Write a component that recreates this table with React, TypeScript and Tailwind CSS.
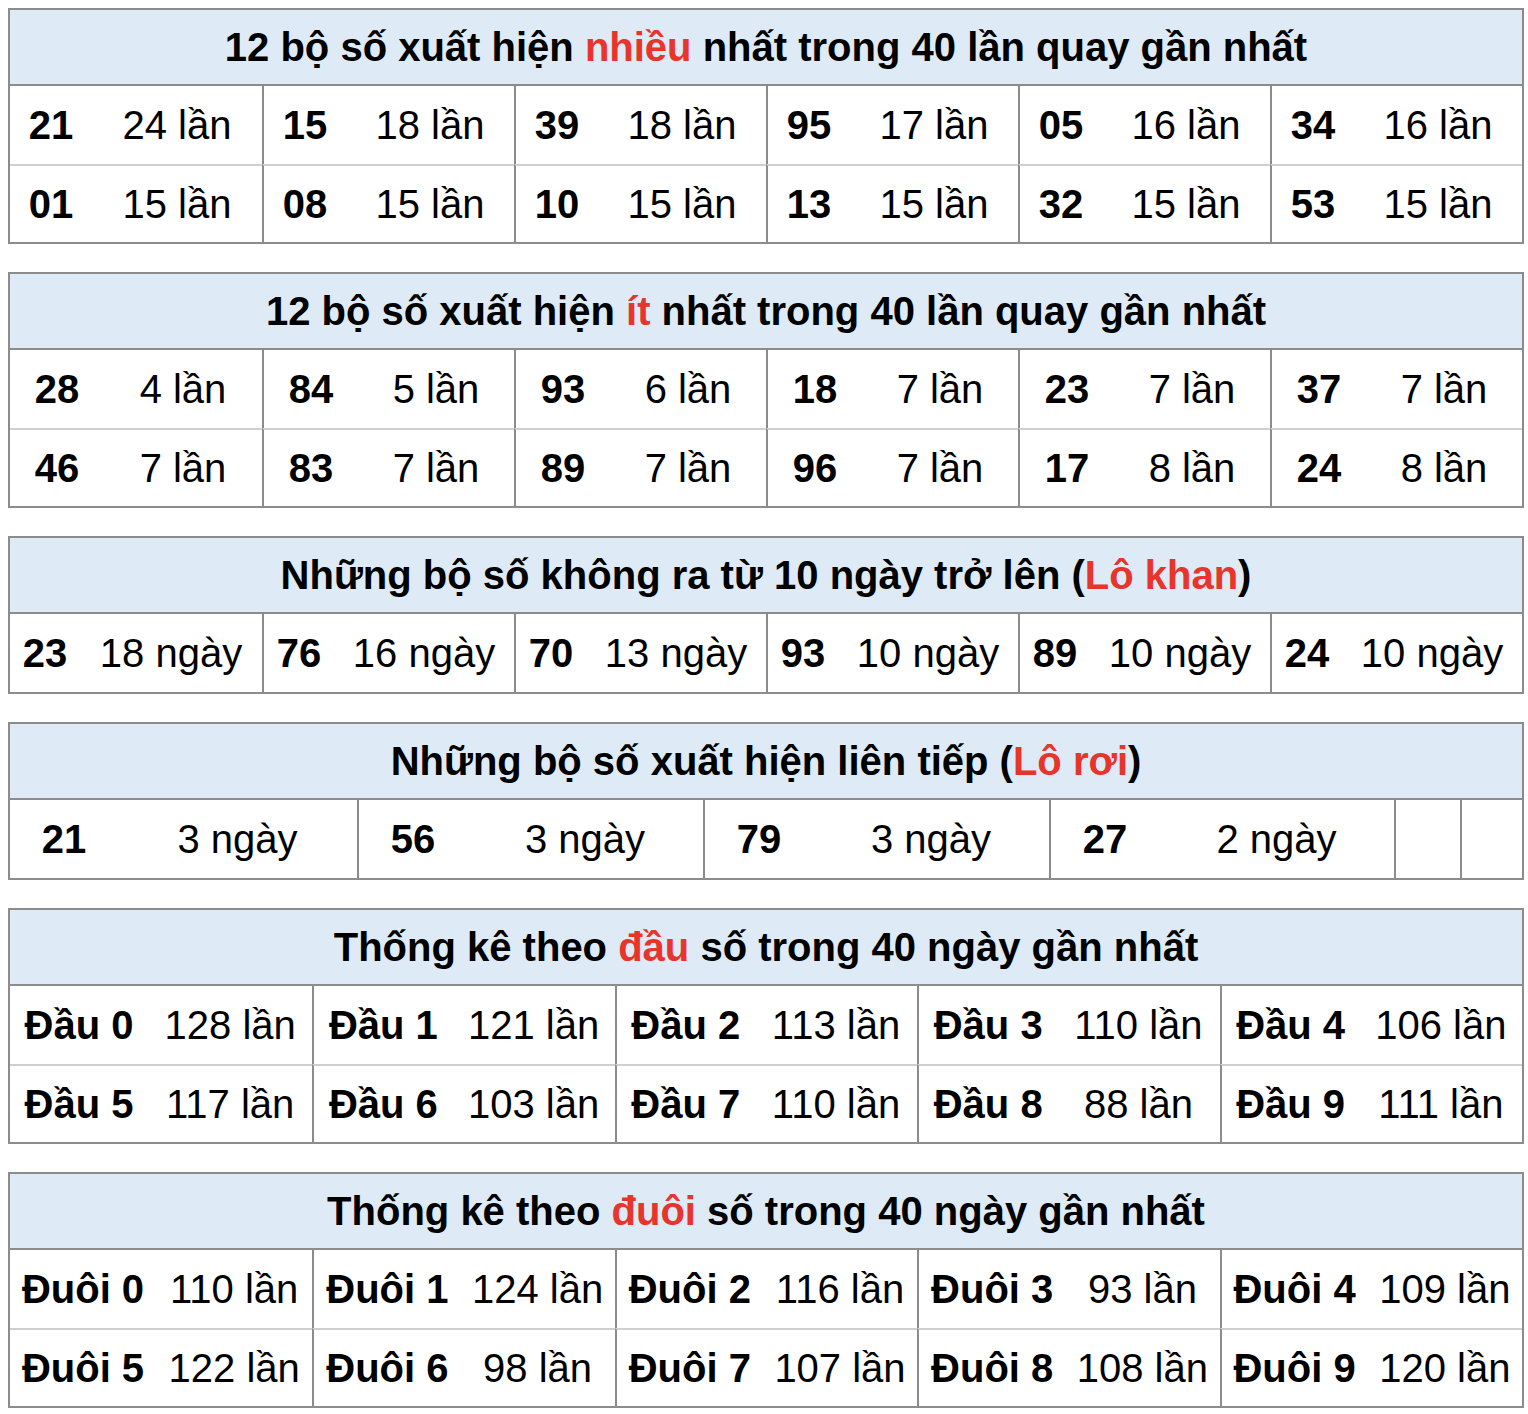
const nhieu = [
  ["21", "24 lần"], ["15", "18 lần"], ["39", "18 lần"], ["95", "17 lần"], ["05", "16 lần"], ["34", "16 lần"],
  ["01", "15 lần"], ["08", "15 lần"], ["10", "15 lần"], ["13", "15 lần"], ["32", "15 lần"], ["53", "15 lần"],
];

const it = [
  ["28", "4 lần"], ["84", "5 lần"], ["93", "6 lần"], ["18", "7 lần"], ["23", "7 lần"], ["37", "7 lần"],
  ["46", "7 lần"], ["83", "7 lần"], ["89", "7 lần"], ["96", "7 lần"], ["17", "8 lần"], ["24", "8 lần"],
];

const khan = [
  ["23", "18 ngày"], ["76", "16 ngày"], ["70", "13 ngày"], ["93", "10 ngày"], ["89", "10 ngày"], ["24", "10 ngày"],
];

const roi = [
  ["21", "3 ngày"], ["56", "3 ngày"], ["79", "3 ngày"], ["27", "2 ngày"], ["", ""], ["", ""],
];

const dau = [
  ["Đầu 0", "128 lần"], ["Đầu 1", "121 lần"], ["Đầu 2", "113 lần"], ["Đầu 3", "110 lần"], ["Đầu 4", "106 lần"],
  ["Đầu 5", "117 lần"], ["Đầu 6", "103 lần"], ["Đầu 7", "110 lần"], ["Đầu 8", "88 lần"], ["Đầu 9", "111 lần"],
];

const duoi = [
  ["Đuôi 0", "110 lần"], ["Đuôi 1", "124 lần"], ["Đuôi 2", "116 lần"], ["Đuôi 3", "93 lần"], ["Đuôi 4", "109 lần"],
  ["Đuôi 5", "122 lần"], ["Đuôi 6", "98 lần"], ["Đuôi 7", "107 lần"], ["Đuôi 8", "108 lần"], ["Đuôi 9", "120 lần"],
];

function Header({ children }: { children: React.ReactNode }) {
  return (
    <div className="h-[76px] bg-[#deeaf6] border-b-2 border-[#8c8c8c] flex items-center justify-center font-bold">
      {children}
    </div>
  );
}

function Red({ children }: { children: React.ReactNode }) {
  return <span className="text-[#e8342a]">{children}</span>;
}

function Cell({
  so,
  dem,
  first,
  topRow,
  numW,
}: {
  so: string;
  dem: string;
  first: boolean;
  topRow: boolean;
  numW: string;
}) {
  return (
    <div
      className={
        "h-[78px] flex items-center " +
        (first ? "" : "border-l-2 border-l-[#8c8c8c] ") +
        (topRow ? "" : "border-t-2 border-t-[#d0d0d0]")
      }
    >
      <div className={numW + " text-center font-bold whitespace-nowrap"}>{so}</div>
      <div className="flex-1 text-center whitespace-nowrap">{dem}</div>
    </div>
  );
}

function Grid({
  items,
  cols,
  gridCls,
  numW,
}: {
  items: string[][];
  cols: number;
  gridCls: string;
  numW: string;
}) {
  return (
    <div className={"grid " + gridCls}>
      {items.map(([so, dem], i) => (
        <Cell
          key={i}
          so={so}
          dem={dem}
          first={i % cols === 0}
          topRow={i < cols}
          numW={numW}
        />
      ))}
    </div>
  );
}

export default function App() {
  return (
    <div
      className="bg-white w-[1528px] pl-2 pr-1 pt-2 pb-2 flex flex-col gap-[28px] text-black text-[40px] leading-none"
      style={{ fontFamily: '"Liberation Sans", Arial, sans-serif' }}
    >
      <section className="border-2 border-[#8c8c8c]">
        <Header>
          12 bộ số xuất hiện&nbsp;<Red>nhiều</Red>&nbsp;nhất trong 40 lần quay gần nhất
        </Header>
        <Grid items={nhieu} cols={6} gridCls="grid-cols-6" numW="w-[82px]" />
      </section>

      <section className="border-2 border-[#8c8c8c]">
        <Header>
          12 bộ số xuất hiện&nbsp;<Red>ít</Red>&nbsp;nhất trong 40 lần quay gần nhất
        </Header>
        <Grid items={it} cols={6} gridCls="grid-cols-6" numW="w-[94px]" />
      </section>

      <section className="border-2 border-[#8c8c8c]">
        <Header>
          Những bộ số không ra từ 10 ngày trở lên (<Red>Lô khan</Red>)
        </Header>
        <Grid items={khan} cols={6} gridCls="grid-cols-6" numW="w-[70px]" />
      </section>

      <section className="border-2 border-[#8c8c8c]">
        <Header>
          Những bộ số xuất hiện liên tiếp (<Red>Lô rơi</Red>)
        </Header>
        <Grid
          items={roi}
          cols={6}
          gridCls="grid-cols-[347px_346px_346px_345px_66px_1fr]"
          numW="w-[108px]"
        />
      </section>

      <section className="border-2 border-[#8c8c8c]">
        <Header>
          Thống kê theo&nbsp;<Red>đầu</Red>&nbsp;số trong 40 ngày gần nhất
        </Header>
        <Grid items={dau} cols={5} gridCls="grid-cols-5" numW="w-[138px]" />
      </section>

      <section className="border-2 border-[#8c8c8c]">
        <Header>
          Thống kê theo&nbsp;<Red>đuôi</Red>&nbsp;số trong 40 ngày gần nhất
        </Header>
        <Grid items={duoi} cols={5} gridCls="grid-cols-5" numW="w-[146px]" />
      </section>
    </div>
  );
}
